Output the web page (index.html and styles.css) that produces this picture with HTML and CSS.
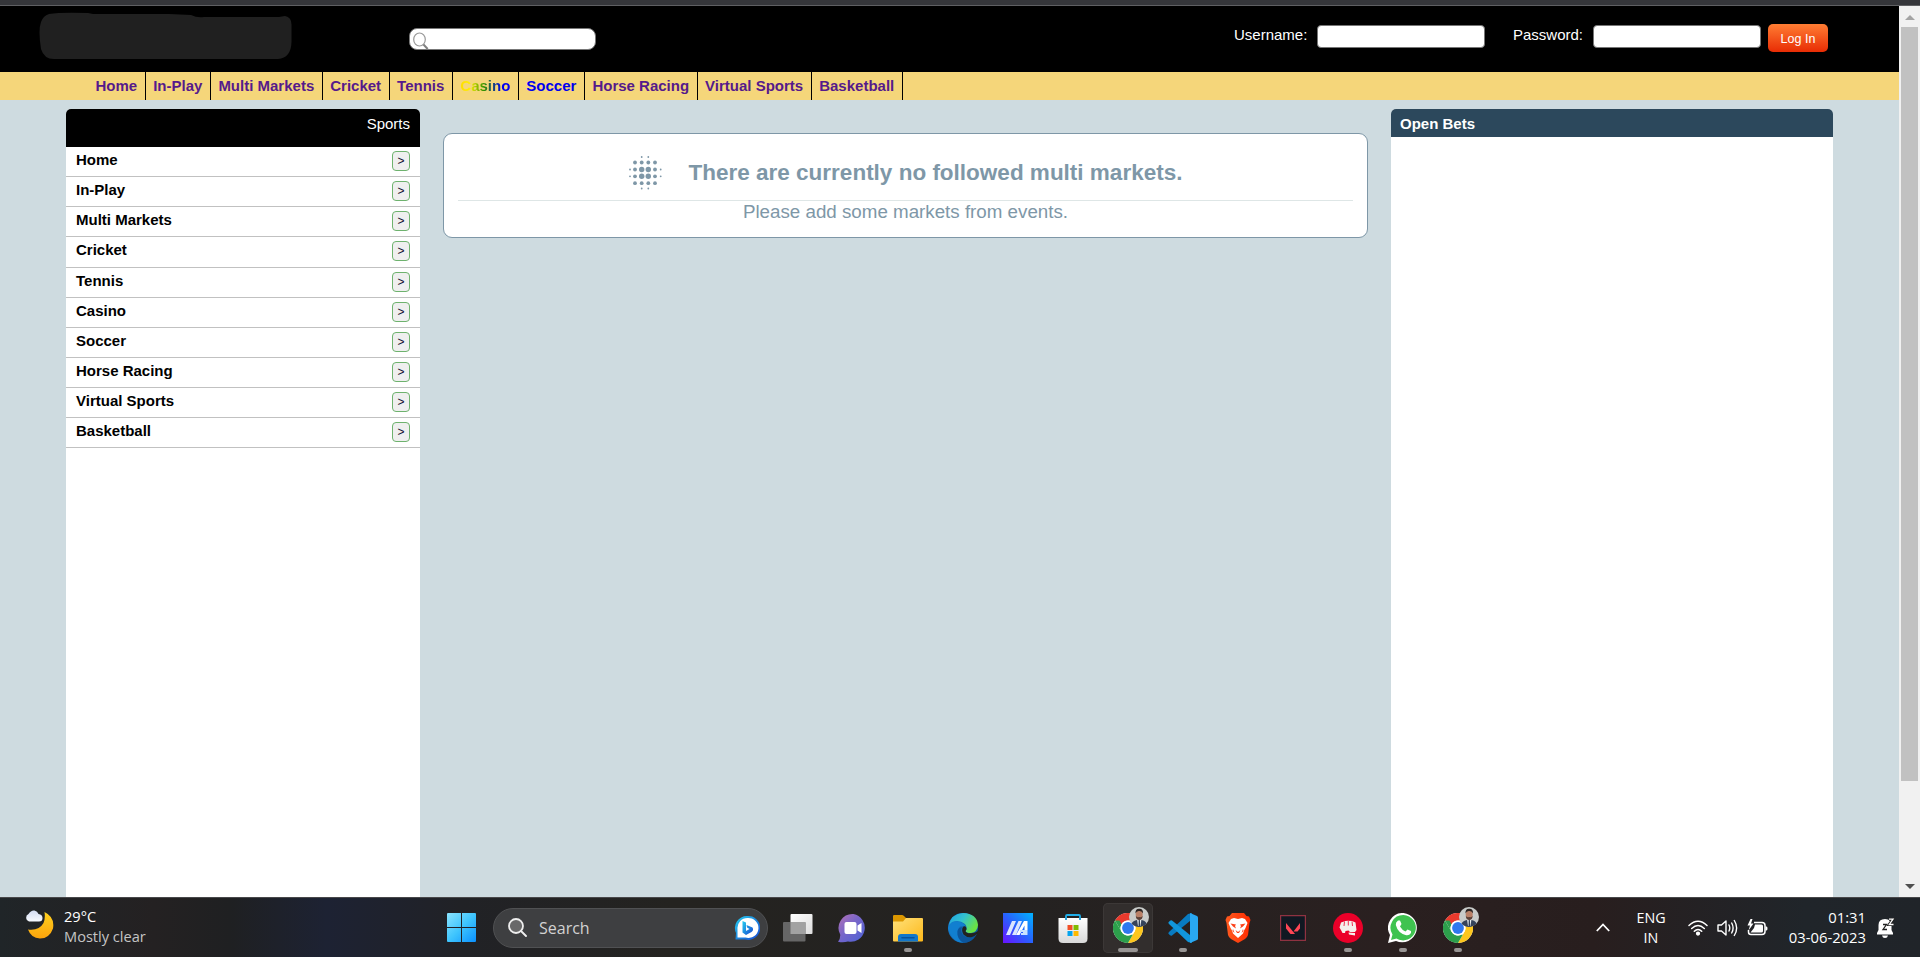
FILE: index.html
```
<!DOCTYPE html>
<html lang="en">
<head>
<meta charset="utf-8">
<title>Multi Markets</title>
<link rel="stylesheet" href="styles.css">
</head>
<body>
<svg class="defs" width="0" height="0" aria-hidden="true">
  <defs>
    <linearGradient id="gMoon" x1="0" y1="0" x2="0" y2="1"><stop offset="0" stop-color="#ffd21f"/><stop offset="1" stop-color="#fba30c"/></linearGradient>
    <linearGradient id="gCloud" x1="0" y1="0" x2="0" y2="1"><stop offset="0" stop-color="#d3dcf3"/><stop offset="1" stop-color="#f7faff"/></linearGradient>
    <linearGradient id="gWin" gradientUnits="userSpaceOnUse" x1="0" y1="0" x2="29" y2="29"><stop offset="0" stop-color="#8be4ff"/><stop offset=".5" stop-color="#3fc5fd"/><stop offset="1" stop-color="#0a90ff"/></linearGradient>
    <linearGradient id="gBing" x1="0" y1="0" x2="1" y2="1"><stop offset="0" stop-color="#25cdf0"/><stop offset="1" stop-color="#1747d0"/></linearGradient>
    <linearGradient id="gTeams" x1="0" y1="0" x2="1" y2="1"><stop offset="0" stop-color="#b672b5"/><stop offset=".45" stop-color="#7765c9"/><stop offset="1" stop-color="#4a62d6"/></linearGradient>
    <linearGradient id="gFold" x1="0" y1="0" x2="1" y2="1"><stop offset="0" stop-color="#ffe17a"/><stop offset="1" stop-color="#fdb81a"/></linearGradient>
    <linearGradient id="gEdge" x1="0" y1="0" x2="1" y2=".5"><stop offset="0" stop-color="#1fa2e0"/><stop offset=".5" stop-color="#33c2cf"/><stop offset="1" stop-color="#6ae344"/></linearGradient>
    <linearGradient id="gEdgeB" x1="0" y1="0" x2="1" y2="1"><stop offset="0" stop-color="#1b88da"/><stop offset="1" stop-color="#0a4a8c"/></linearGradient>
    <linearGradient id="gMa" x1="0" y1="1" x2="1" y2="0"><stop offset="0" stop-color="#6a11ff"/><stop offset=".5" stop-color="#2862ff"/><stop offset="1" stop-color="#00b4ff"/></linearGradient>
    <linearGradient id="gBag" x1="0" y1="0" x2="0" y2="1"><stop offset="0" stop-color="#ffffff"/><stop offset="1" stop-color="#d9d9d9"/></linearGradient>
    <linearGradient id="gBrave" x1="0" y1="0" x2="1" y2="0"><stop offset="0" stop-color="#ff5a1f"/><stop offset="1" stop-color="#ff2b00"/></linearGradient>
    <linearGradient id="gTask" x1="0" y1="0" x2="1" y2="1"><stop offset="0" stop-color="#ffffff"/><stop offset="1" stop-color="#dddddd"/></linearGradient>
    <symbol id="chrome" viewBox="0 0 30 30">
      <circle cx="15" cy="15" r="15" fill="#fff"/>
      <path d="M2 7.500A15 15 0 0 1 28 7.500H15A7.500 7.500 0 0 0 8.500 11.250Z" fill="#ea3a2d"/>
      <path d="M28 7.500A15 15 0 0 1 15 30L21.500 18.750A7.500 7.500 0 0 0 21.500 11.250L19.300 7.500Z" fill="#fdc61d"/>
      <path d="M15 30A15 15 0 0 1 2 7.500L8.500 18.750A7.500 7.500 0 0 0 18.500 21.600L19.800 21.700Z" fill="#2c9f4b"/>
      <path d="M2 7.500L8.500 18.750A7.500 7.500 0 0 1 8.500 11.250L6.500 7.500Z" fill="#2c9f4b"/>
      <circle cx="15" cy="15" r="7.500" fill="#fff"/><circle cx="15" cy="15" r="5.900" fill="#2f78ee"/>
    </symbol>
    <symbol id="avatar" viewBox="0 0 20 20">
      <circle cx="10" cy="10" r="10" fill="#c8cbc9"/>
      <path d="M2.500 16.600Q4 13.500 8 13H12.500Q16.500 13.500 17.500 16.600A10 10 0 0 1 2.500 16.600Z" fill="#35435a"/>
      <path d="M8 12H12.500L11.500 19H9Z" fill="#e8edf0"/><path d="M9.700 13H10.900L11.200 19H9.500Z" fill="#334257"/>
      <ellipse cx="10.200" cy="7.500" rx="3.500" ry="5" fill="#b98067"/>
      <path d="M6.500 6.500Q6 1.500 10.300 1.700Q14.500 1.600 13.900 6.500Q13 3.700 10.200 4Q7.500 3.700 6.500 6.500Z" fill="#2c2523"/>
      <path d="M6.800 8.800Q7.500 10.600 10.200 10Q13 10.600 13.700 8.800Q13.500 13 10.200 13Q7 13 6.800 8.800Z" fill="#5a4038"/>
    </symbol>
  </defs>
</svg>

<div class="desktop">
  <div class="window-edge"></div>
  <div class="viewport">
    <div class="page">
      <header class="top">
        <svg class="brand" width="253" height="49" viewBox="0 0 253 49"><path d="M10 2Q22 0 49 1L54 2H130L152 3Q158 6 165 5H240L246 4Q253 5 252.500 14V30Q252 46 239 47H15Q5 47 2 37Q-1 18 2 10Q4 4 10 2Z" fill="#202020"/></svg>
        <div class="search">
          <svg width="16" height="18" viewBox="0 0 16 18" fill="none" stroke="#999"><ellipse cx="6.500" cy="7.500" rx="5.800" ry="6.500" stroke-width="1.200"/><path d="M10.500 12.500L14.700 17" stroke="#808080" stroke-width="2"/></svg>
          <input class="search-input" type="text" aria-label="Search events">
        </div>
        <form class="login">
          <label class="user-label" for="user">Username:</label><input class="field" id="user" type="text">
          <label class="pass-label" for="pass">Password:</label><input class="field" id="pass" type="password">
          <button class="login-button" type="button">Log In</button>
        </form>
      </header>
      <nav class="nav">
        <a>Home</a><a>In-Play</a><a>Multi Markets</a><a>Cricket</a><a>Tennis</a><a><span class="rainbow">Casino</span></a><a class="unvisited">Soccer</a><a>Horse Racing</a><a>Virtual Sports</a><a>Basketball</a>
      </nav>
      <main class="columns">
        <aside class="sports">
          <h2 class="sports-title">Sports</h2>
          <ul class="sports-list">
            <li>Home<span class="go">&gt;</span></li>
            <li>In-Play<span class="go">&gt;</span></li>
            <li>Multi Markets<span class="go">&gt;</span></li>
            <li>Cricket<span class="go">&gt;</span></li>
            <li>Tennis<span class="go">&gt;</span></li>
            <li>Casino<span class="go">&gt;</span></li>
            <li>Soccer<span class="go">&gt;</span></li>
            <li>Horse Racing<span class="go">&gt;</span></li>
            <li>Virtual Sports<span class="go">&gt;</span></li>
            <li>Basketball<span class="go">&gt;</span></li>
          </ul>
        </aside>
        <section class="notice">
          <div class="notice-head">
            <svg width="34" height="34" viewBox="0 0 34 34" fill="#7e97a7">
              <g><circle cx="12.700" cy="1" r=".9"/><circle cx="19.300" cy="1" r=".9"/><circle cx="12.700" cy="32.500" r=".9"/><circle cx="19.300" cy="32.500" r=".9"/><circle cx="1" cy="13.500" r=".9"/><circle cx="1" cy="20.300" r=".9"/><circle cx="31.700" cy="13.500" r=".9"/><circle cx="31.700" cy="20.300" r=".9"/></g>
              <g><circle cx="6" cy="6.500" r="1.900"/><circle cx="12.700" cy="6.500" r="1.900"/><circle cx="19.300" cy="6.500" r="1.900"/><circle cx="26" cy="6.500" r="1.900"/><circle cx="6" cy="27.200" r="1.900"/><circle cx="12.700" cy="27.200" r="1.900"/><circle cx="19.300" cy="27.200" r="1.900"/><circle cx="26" cy="27.200" r="1.900"/><circle cx="6" cy="13.500" r="1.900"/><circle cx="26" cy="13.500" r="1.900"/><circle cx="6" cy="20.300" r="1.900"/><circle cx="26" cy="20.300" r="1.900"/></g>
              <g><circle cx="12.700" cy="13.500" r="2.700"/><circle cx="19.300" cy="13.500" r="2.700"/><circle cx="12.700" cy="20.300" r="2.700"/><circle cx="19.300" cy="20.300" r="2.700"/></g>
            </svg>
            <h3>There are currently no followed multi markets.</h3>
          </div>
          <p>Please add some markets from events.</p>
        </section>
        <aside class="bets"><h2>Open Bets</h2></aside>
      </main>
    </div>
    <div class="scrollbar"><i class="arrow up"></i><i class="thumb"></i><i class="arrow down"></i></div>
  </div>

  <footer class="taskbar">
    <div class="weather">
      <svg width="29" height="30" viewBox="0 0 29 30"><path d="M19.500 2Q30 7 28 18.500Q24.500 28.500 15 28.500Q6 28 3 19.500Q14 21 18.500 13Q20.500 8 19.500 2Z" fill="url(#gMoon)"/><path d="M4 11.500A4 4 0 0 1 3.500 4Q6 0 9.500 .5Q12.500 1 13.500 4Q17.500 4.500 17.500 8Q17.500 11.500 14 11.500Z" fill="url(#gCloud)"/></svg>
      <div class="weather-text"><b>29°C</b><span>Mostly clear</span></div>
    </div>
    <svg class="start" width="29" height="29" viewBox="0 0 29 29" fill="url(#gWin)"><path d="M1 0H14V14H0V1Q0 0 1 0ZM15 0H28Q29 0 29 1V14H15ZM0 15H14V29H1Q0 29 0 28ZM15 15H29V28Q29 29 28 29H15Z"/></svg>
    <div class="task-search">
      <svg width="19" height="19" viewBox="0 0 19 19"><circle cx="8" cy="8" r="7" fill="#686869" stroke="#eee" stroke-width="1.800"/><path d="M13 13L18 18" stroke="#eee" stroke-width="1.900" stroke-linecap="round"/></svg>
      <span>Search</span>
      <svg class="bing" width="26" height="26" viewBox="0 0 26 26"><path d="M13 1A12 12 0 1 1 11 24.500H1.500L2 18A12 12 0 0 1 13 1Z" fill="url(#gBing)"/><path d="M13.500 3A10 10 0 1 1 11.500 22.500H3.500V14A10 10 0 0 1 13.500 3Z" fill="#fff"/><path d="M8.500 6L12 7.500V16L15.500 14L13 12.500L12.500 10L18.500 12.500Q20 15 17.500 17L12 20L8.500 17.500Z" fill="url(#gBing)"/></svg>
    </div>
    <div class="apps">
      <div class="app"><svg width="30" height="30" viewBox="0 0 30 30"><rect x="7.500" y="1" width="22" height="20" rx="1" fill="url(#gTask)"/><rect x="0" y="9" width="22.500" height="19.500" rx="1" fill="#666"/><path d="M7.500 9H22.500V21H7.500Z" fill="#a2a2a2"/></svg></div>
      <div class="app"><svg width="30" height="30" viewBox="0 0 30 30"><path d="M15.500 1A14 14 0 1 1 10 28.500Q5 30 0 28.700Q2.500 26 2.200 21.500A14 14 0 0 1 15.500 1Z" fill="url(#gTeams)"/><rect x="6.500" y="9" width="12" height="12" rx="2" fill="#fff"/><path d="M19.500 12.500L23.500 10V20L19.500 17.500Z" fill="#fff"/></svg></div>
      <div class="app"><svg width="30" height="30" viewBox="0 0 30 30"><path d="M0 3Q0 2 1.200 2H9Q10 2 11 3L13 5V10H0Z" fill="#dc9700"/><path d="M0 8.500H10L13 5H29Q30 5 30 6V27.500Q30 28.500 29 28.500H1Q0 28.500 0 27.500Z" fill="url(#gFold)"/><path d="M5 28.500V24Q5 21 8 21H22Q25 21 25 24V28.500Z" fill="#1277cb"/><path d="M9 24.700H21" stroke="#08529c" stroke-width="1.600" stroke-linecap="round"/></svg><i class="dot"></i></div>
      <div class="app"><svg width="30" height="30" viewBox="0 0 30 30"><circle cx="15" cy="15" r="15" fill="url(#gEdgeB)"/><path d="M1 12Q3 1 15 0Q29 .5 30 12Q29.500 19 23 20Q18 20 17.500 18Q20 15 17 11Q11 6 4 9Z" fill="url(#gEdge)"/><path d="M0 15Q2 8 9 8.500Q16 9 18 14Q11 11 9.500 18Q9 26 17 29.800Q4 30.500 0 15Z" fill="#117fd0"/><path d="M14 14Q11 20 17 23.500Q22 26.500 28 22Q23 30 15.500 30Q8.500 26 9.500 18Q10.500 14.500 14 14Z" fill="#0c559b"/><path d="M17.500 13.500Q19.500 16 17.500 18Q18 20.500 23 20.300Q27 20.200 30 18V20Q27 23 24 24Q19 25 15.500 21.500Q13 17 15 14Q16 13 17.500 13.500Z" fill="#22221f"/></svg></div>
      <div class="app"><svg width="30" height="30" viewBox="0 0 30 30"><path d="M0 0H30V30H0Z" fill="url(#gMa)"/><path d="M3 22L9 8H13L7 22ZM9 22L15.500 8H19L13 22Z" fill="#dbe6ff"/><path d="M13 22L21 8H24.500V17H21.500V12.500L16.500 22Z" fill="#fff"/><path d="M17 17H24.500V22H18V20H20V19H17Z" fill="#c9e2ff"/></svg></div>
      <div class="app"><svg width="30" height="30" viewBox="0 0 30 30"><path d="M8 8V3Q8 2 9 2H21Q22 2 22 3V8" fill="none" stroke="#20aee9" stroke-width="1.800"/><path d="M.500 5H29.500V25.500Q29.500 30 25 30H5Q.5 30 .5 25.500Z" fill="url(#gBag)"/><path d="M8 5V7M22 5V7" stroke="#1593cf" stroke-width="1.800"/><path d="M9.500 12H14.500V17H9.500Z" fill="#f14f26"/><path d="M15.500 12H20.500V17H15.500Z" fill="#7fba00"/><path d="M9.500 18H14.500V23H9.500Z" fill="#05a4ef"/><path d="M15.500 18H20.500V23H15.500Z" fill="#ffb900"/></svg></div>
      <div class="app active"><svg width="30" height="30"><use href="#chrome"/></svg><svg class="face" width="20" height="20"><use href="#avatar"/></svg><i class="dot wide"></i></div>
      <div class="app"><svg width="30" height="30" viewBox="0 0 30 30"><path d="M22 8L4 22.500Q3 23 2 22.300L.5 20.800Q0 20 1 19L20 1L24 0Z" fill="#087bc2"/><path d="M22 22L4 7.500Q3 7 2 7.700L.5 9.200Q0 10 1 11L20 29L24 30Z" fill="#1196dc"/><path d="M22 0L29 3Q30 3.500 30 4.500V25.500Q30 26.500 29 27L22 30Q22 29 22 27V3Z" fill="#29a8f2"/></svg><i class="dot"></i></div>
      <div class="app"><svg width="26" height="30" viewBox="0 0 26 30"><path d="M7 0H19L21.500 3L24 3.500L25.500 7L24.500 10L23 22Q22.500 24 20 26L13 30L6 26Q3.500 24 3 22L1.500 10L.500 7L2 3.500L4.500 3Z" fill="url(#gBrave)"/><path d="M9 5L13 6L17 5L20 6L22.500 10L20.500 15L19 17.500L18 20.500L13 25L8 20.500L7 17.500L5.500 15L3.500 10L6 6Z" fill="#fff"/><path d="M5.500 10.500L11 11.500L10 13L11 15.500L8 13.500ZM20.500 10.500L15 11.500L16 13L15 15.500L18 13.500ZM10.500 17L13 19L15.500 17L14 20H12ZM8 16L9.500 20L7.500 18ZM18 16L16.500 20L18.500 18Z" fill="#fc411a"/></svg></div>
      <div class="app"><svg width="26" height="26" viewBox="0 0 26 26"><path d="M.600 .6H25.400V25.400H.6Z" fill="#101822" stroke="#8f3241" stroke-width="1.200"/><path d="M6 8L15 19H10.500L6 13.500ZM20 8V13.500L17.500 16.500H13.500Z" fill="#ff4655"/></svg></div>
      <div class="app"><svg width="30" height="30" viewBox="0 0 30 30"><circle cx="15" cy="15" r="15" fill="#eb0029"/><path d="M8 9.500L11 8.500L12 8L15 7.700L19 8L22.500 9.500L23.500 17L22 19H17L15.500 17.500L12.500 18L12 20H9.500L8.500 18L6.500 14.500ZM15.500 19.500L22 20V22.500L16 21.500Z" fill="#f5f0ec"/><path d="M11.500 8.500L11 13M15.300 8V12.500M19 8.500L19.500 13" stroke="#eb0029" stroke-width=".8"/></svg><i class="dot"></i></div>
      <div class="app"><svg width="30" height="30" viewBox="0 0 30 30"><path d="M15.500 0A14.700 14.700 0 1 1 8 28L0 30L2 22A14.700 14.700 0 0 1 15.500 0Z" fill="#fff"/><path d="M15.500 2A12.700 12.700 0 1 1 8.500 25.500L3 27L4.500 21.500A12.700 12.700 0 0 1 15.500 2Z" fill="#3fc350"/><path d="M10 7.500H12L13.500 11L12 13.500Q14 17 17.500 18.500L19.500 16.500L23 18V20Q21 23 17.500 22Q10 20 7.800 12Q7.500 9 10 7.500Z" fill="#fff"/></svg><i class="dot"></i></div>
      <div class="app"><svg width="30" height="30"><use href="#chrome"/></svg><svg class="face" width="20" height="20"><use href="#avatar"/></svg><i class="dot"></i></div>
    </div>
    <div class="tray">
      <svg class="chevron" width="14" height="9" viewBox="0 0 14 9" fill="none" stroke="#fff" stroke-width="1.800"><path d="M.8 8L7 1.500L13.200 8"/></svg>
      <div class="lang"><span>ENG</span><span>IN</span></div>
      <svg class="wifi" width="20" height="16" viewBox="0 0 20 16" fill="none" stroke="#fff" stroke-width="1.500" stroke-linecap="round"><path d="M1 5.500Q10-3 19 5.500M3.700 8.500Q10 2.500 16.300 8.500M6.300 11.300Q10 7.500 13.700 11.300"/><circle cx="10" cy="13.600" r="1.400" fill="#fff"/></svg>
      <svg class="speaker" width="21" height="18" viewBox="0 0 21 18" fill="none" stroke="#fff" stroke-width="1.400" stroke-linecap="round" stroke-linejoin="round"><path d="M1 6H4.500L9 2V16L4.500 12H1ZM12 6Q13.500 9 12 12M14.700 4Q17.500 9 14.700 14M17.300 1.500Q22 9 17.300 16.500"/></svg>
      <svg class="battery" width="21" height="18" viewBox="0 0 21 18"><path d="M7 3.500H15Q18 3.500 18 6.500V12.500Q18 15.500 15 15.500H4Q1.500 15.500 1.500 13V11" fill="none" stroke="#fff" stroke-width="1.500"/><path d="M8 5.500H14.500Q16 5.500 16 7V12Q16 13.500 14.500 13.500H3.500L7 9Z" fill="#fff"/><path d="M18.500 7.500H19.500Q20.500 7.500 20.500 9.500T19.500 11.500H18.500ZM3.500 0L.5 6.500H3L1.500 11.500L6.500 4.500H4L5.500 0Z" fill="#fff"/></svg>
      <div class="clock"><span>01:31</span><span>03-06-2023</span></div>
      <svg class="bell" width="18" height="20" viewBox="0 0 18 20"><path d="M8 1Q14.500 1 14.500 7V12L16 15V16.500H0V15L1.500 12V7Q1.500 1 8 1ZM5 17.500H11Q10.500 20 8 20T5 17.500Z" fill="#fff"/><path d="M6 6.500H9.500L6 11.500H10" fill="none" stroke="#222" stroke-width="1.300"/><path d="M12 1.200H16L12.300 6.500H16.500" fill="none" stroke="#222" stroke-width="3"/><path d="M12 1.200H16L12.300 6.500H16.500" fill="none" stroke="#fff" stroke-width="1.300"/></svg>
    </div>
  </footer>
</div>
</body>
</html>
```
FILE: styles.css
```
* { box-sizing: border-box; }
body { margin: 0; overflow: hidden; font-family: Arial, "Liberation Sans", sans-serif; font-size: 15px; }
h2, h3, p, ul { margin: 0; padding: 0; }
svg { display: block; flex: none; }
.defs { position: absolute; }

.desktop { width: 1920px; height: 957px; display: flex; flex-direction: column; background: #cedbe0; }
.window-edge { height: 6px; flex: none; background: #35363a; border-bottom: 1px solid #5f6063; }
.viewport { height: 891px; display: flex; flex: none; }
.page { width: 1899px; display: flex; flex-direction: column; }

.top { height: 66px; flex: none; background: #000; display: flex; align-items: flex-start; color: #fff; padding-left: 39px; }
.brand { margin-top: 6px; }
.search { margin: 22px 0 0 117px; width: 187px; height: 22px; background: #fff; border: 1px solid #777; border-radius: 8px; display: flex; padding: 3px 0 0 3px; }
.search-input { border: 0; outline: 0; width: 150px; height: 15px; padding: 0; background: transparent; }
.login { margin-left: 638px; display: flex; align-items: flex-start; line-height: 17px; }
.user-label { width: 83px; margin: 20px 0 0 0; }
.pass-label { width: 81px; margin: 20px 0 0 28px; }
.field { width: 168px; height: 23px; margin-top: 19px; border: 1px solid #767676; border-radius: 4px; background: #fff; padding: 0; }
.pass-label + .field { margin-left: -1px; }
.login-button { width: 60px; height: 28px; margin: 18px 0 0 7px; padding: 2px 0 0; border: 0; border-radius: 5px; color: #fff; background: linear-gradient(#ff7d33, #e82c04); font: 12.500px Arial, "Liberation Sans", sans-serif; }

.nav { height: 28px; flex: none; background: #f5d67a; display: flex; padding-left: 88px; font-weight: bold; color: #551a8b; line-height: 28px; }
.nav a { padding: 0 7.500px; border-right: 1px solid #000; white-space: nowrap; }
.nav .unvisited { color: #0000ee; }
.rainbow { color: transparent; background: linear-gradient(90deg, #ffe000 5%, #fff000 20%, #2f9000 48%, #0000f0 85%); background-clip: text; -webkit-background-clip: text; }

.columns { flex: 1; display: flex; align-items: flex-start; padding: 9px 0 0 66px; }
.sports { width: 354px; height: 788px; background: #fff; border-radius: 5px 5px 0 0; overflow: hidden; }
.sports-title { height: 38px; background: #000; color: #fff; font-size: 15px; font-weight: normal; text-align: right; padding: 6px 10px 0 0; line-height: 18px; }
.sports-list { list-style: none; font-weight: bold; }
.sports-list li { height: 30.130px; border-bottom: 1px solid #c1c1c1; display: flex; justify-content: space-between; padding: 4px 10px 0; line-height: 18px; }
.go { width: 18px; height: 20px; border: 1px solid #6eb26e; border-radius: 4px; background: #efefef; font-size: 12px; font-weight: normal; text-align: center; line-height: 18px; color: #101030; }

.notice { width: 925px; height: 105px; margin: 24px 0 0 23px; background: #fff; border: 1px solid #7e97a7; border-radius: 9px; padding: 16px 14px 0; color: #7e97a7; text-align: center; }
.notice-head { height: 51px; border-bottom: 1px solid #dee6e6; display: flex; justify-content: center; gap: 26px; padding-top: 6px; }
.notice h3 { font-size: 22.500px; line-height: 34px; white-space: nowrap; }
.notice p { font-size: 18.750px; line-height: 21px; }

.bets { width: 442px; height: 788px; margin-left: 23px; background: #fff; border-radius: 5px 5px 0 0; overflow: hidden; }
.bets h2 { height: 28px; background: #2c485c; color: #fff; font-size: 15px; line-height: 29px; padding-left: 9px; }

.scrollbar { width: 21px; background: #f1f1f1; display: flex; flex-direction: column; align-items: center; }
.arrow { border: 5px solid transparent; width: 0; height: 0; }
.up { margin-top: 4px; border-bottom-color: #a3a3a3; }
.thumb { margin-top: 7px; width: 17px; height: 754px; background: #c1c1c1; }
.down { margin-top: 103px; border-top-color: #505050; }

.taskbar { height: 60px; border-top: 1px solid #48484a; display: flex; align-items: center; background: linear-gradient(90deg, #202528 0, #242122 8%, #1f2022 12%, #1d2233 17%, #212226 24%, #242320 35%, #242221 53%, #2a2020 72%, #281e1e 83%, #20252a 94%, #202429 100%); color: #fff; font-family: "Open Sans", "Noto Sans", sans-serif; font-size: 15px; line-height: 20px; }
.weather { width: 447px; padding-left: 25px; display: flex; align-items: center; gap: 10px; }
.weather svg { margin-top: -5px; }
.weather-text { display: flex; flex-direction: column; font-size: 14.600px; margin-top: -4px; }
.weather-text b { font-weight: normal; }
.weather-text span { color: #c5c5c5; }
.task-search { width: 275px; height: 40px; margin-left: 17px; border-radius: 20px; background: #3e3f41; border: 1px solid #505153; display: flex; align-items: center; padding-left: 14px; font-size: 16px; color: #d2d2d2; }
.task-search span { margin-left: 12px; }
.bing { margin-left: auto; margin-right: 7px; }
.apps { display: flex; gap: 5px; margin-left: 5px; }
.app { width: 50px; height: 50px; display: flex; align-items: center; justify-content: center; position: relative; }
.active { background: #322e2d; border-radius: 5px; box-shadow: inset 0 0 0 1px #3c3837; }
.face { position: absolute; left: 26px; top: 4px; }
.dot { position: absolute; left: 21px; bottom: 1px; width: 8px; height: 4px; border-radius: 2px; background: #989594; }
.wide { left: 15px; width: 20px; }
.tray { margin-left: 113px; display: flex; align-items: center; }
.lang { width: 40px; margin-left: 21px; display: flex; flex-direction: column; align-items: center; font-size: 14.300px; }
.wifi { margin-left: 17px; }
.speaker { margin-left: 9px; }
.battery { margin-left: 9px; }
.clock { width: 98px; display: flex; flex-direction: column; align-items: flex-end; font-size: 14.800px; margin-top: -2px; }
.bell { margin-left: 11px; }
```
